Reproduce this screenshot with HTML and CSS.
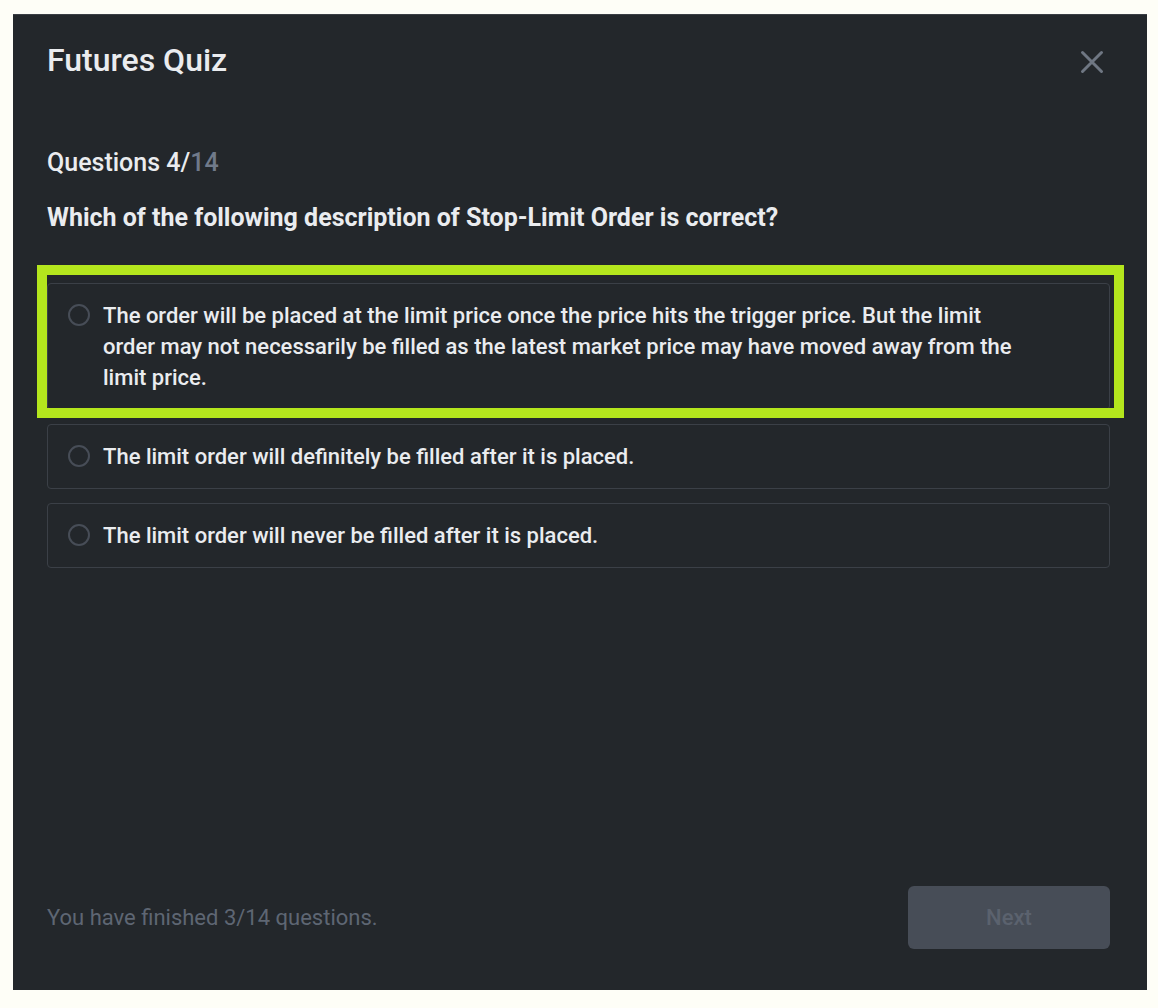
FILE: index.html
```html
<!DOCTYPE html>
<html lang="en">
<head>
<meta charset="utf-8">
<title>Futures Quiz</title>
<link rel="stylesheet" href="styles.css">
</head>
<body>
<div class="modal">
  <div class="header">
    <h1 class="title">Futures Quiz</h1>
    <button class="close" aria-label="Close">
      <svg width="24" height="24" viewBox="0 0 24 24"><path d="M2.5 2.5 L21.5 21.5 M21.5 2.5 L2.5 21.5" stroke="currentColor" stroke-width="3" stroke-linecap="round" fill="none"/></svg>
    </button>
  </div>
  <div class="progress">Questions 4/<span class="total">14</span></div>
  <div class="question">Which of the following description of Stop-Limit Order is correct?</div>
  <div class="options">
    <div class="option-wrap">
      <label class="option">
        <span class="radio"></span>
        <span class="option-text">The order will be placed at the limit price once the price hits the trigger price. But the limit order may not necessarily be filled as the latest market price may have moved away from the limit price.</span>
      </label>
      <div class="highlight"></div>
    </div>
    <label class="option">
      <span class="radio"></span>
      <span class="option-text">The limit order will definitely be filled after it is placed.</span>
    </label>
    <label class="option">
      <span class="radio"></span>
      <span class="option-text">The limit order will never be filled after it is placed.</span>
    </label>
  </div>
  <div class="footer">
    <div class="finished">You have finished 3/14 questions.</div>
    <button class="next" disabled>Next</button>
  </div>
</div>
</body>
</html>
```
FILE: styles.css
```css
html, body {
  margin: 0;
  padding: 0;
  background: #fefef7;
}
body {
  font-family: Roboto, "Liberation Sans", sans-serif;
  color: #eaecef;
}
.modal {
  box-sizing: border-box;
  width: 1134px;
  height: 976px;
  margin: 14px 0 0 13px;
  background: #23272b;
  border-top: 1px solid #3a3e44;
  display: flex;
  flex-direction: column;
  padding: 26px 37px 41px 34px;
}
.header {
  display: flex;
  justify-content: space-between;
  align-items: center;
}
.title {
  margin: 0;
  font-size: 32px;
  line-height: 38px;
  font-weight: 500;
}
.close {
  background: none;
  border: 0;
  padding: 0;
  margin: 4px 6px 0 0;
  color: #6f7783;
  width: 24px;
  height: 24px;
  display: flex;
}
.progress {
  margin-top: 68px;
  font-size: 25px;
  line-height: 32px;
  font-weight: 500;
}
.total {
  color: #707a8a;
}
.question {
  margin-top: 23px;
  font-size: 25px;
  line-height: 32px;
  font-weight: 700;
}
.options {
  margin-top: 49px;
  display: flex;
  flex-direction: column;
  gap: 14px;
}
.option-wrap {
  position: relative;
}
.option {
  box-sizing: border-box;
  display: flex;
  align-items: flex-start;
  gap: 13px;
  padding: 16px 20px;
  border: 1px solid #3b4047;
  border-radius: 4px;
  font-size: 22px;
  line-height: 31px;
  font-weight: 500;
}
.radio {
  flex: none;
  box-sizing: border-box;
  width: 22px;
  height: 22px;
  margin-top: 4px;
  border: 2px solid #474d57;
  border-radius: 50%;
}
.option-text {
  max-width: 935px;
}
.highlight {
  position: absolute;
  top: -18px;
  left: -10px;
  right: -14px;
  bottom: -8px;
  border: 10px solid #b4e61d;
  pointer-events: none;
}
.footer {
  margin-top: auto;
  display: flex;
  justify-content: space-between;
  align-items: center;
}
.finished {
  color: #5e6673;
  font-size: 22px;
  line-height: 30px;
}
.next {
  width: 202px;
  height: 63px;
  border: 0;
  border-radius: 6px;
  background: #474d57;
  color: #5b626e;
  font-family: Roboto, "Liberation Sans", sans-serif;
  font-size: 22px;
  font-weight: 500;
}
```
